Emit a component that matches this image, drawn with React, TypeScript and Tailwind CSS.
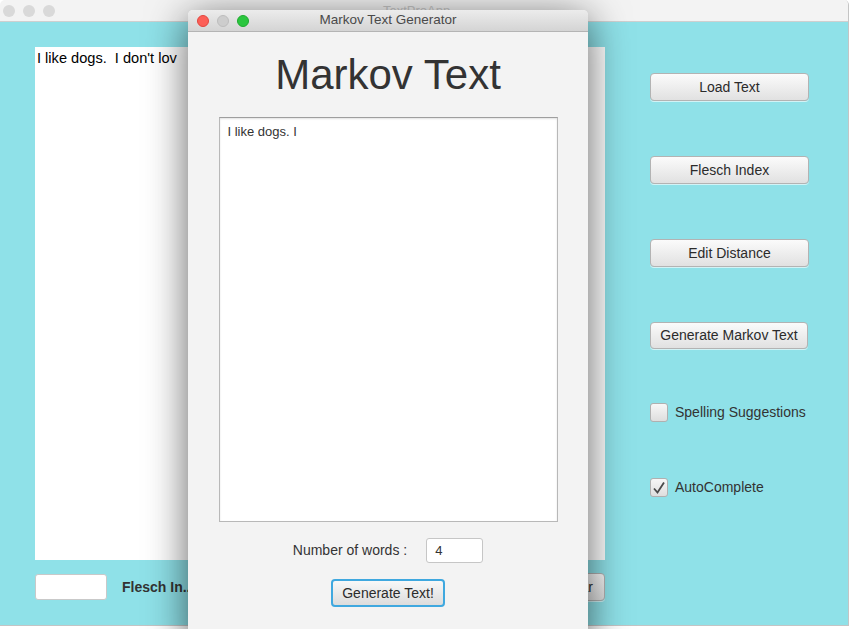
import type { FunctionComponent, ReactNode } from 'react';

const font = { fontFamily: '"Liberation Sans", Arial, sans-serif' };

const FxButton: FunctionComponent<{ label: string; className?: string }> = ({ label, className = '' }) => (
    <div
        className={`flex items-center justify-center rounded-[4px] border border-[#b3b3b3] bg-gradient-to-b from-[#fbfbfb] to-[#e1e1e1] text-[14px] text-[#2b2b2b] shadow-[0_1px_0_rgba(255,255,255,0.6)] ${className}`}
    >
        {label}
    </div>
);

const CheckBox: FunctionComponent<{ checked?: boolean; children: ReactNode }> = ({ checked, children }) => (
    <div className="flex items-center h-[19px]">
        <div className="flex items-center justify-center w-[18px] h-[19px] rounded-[3px] border border-[#b0b0b0] bg-gradient-to-b from-[#f7f7f7] to-[#dedede]">
            {checked && (
                <svg width="14" height="14" viewBox="0 0 14 14">
                    <path d="M2 7.5 L5.5 11.5 L12 1.5" fill="none" stroke="#4a4a4a" strokeWidth="1.8" />
                </svg>
            )}
        </div>
        <span className="ml-[7px] text-[14px] text-[#333]">{children}</span>
    </div>
);

const Light: FunctionComponent<{ color: string }> = ({ color }) => (
    <div className={`w-[12px] h-[12px] rounded-full ${color}`} />
);

export default function App() {
    return (
        <div className="relative w-[851px] h-[629px] overflow-hidden bg-white" style={font}>
            {/* main window */}
            <div className="w-[849px] h-[626px] flex flex-col rounded-t-[5px] border-r border-b border-[#c4c4c4] overflow-hidden">
                <div className="h-[22px] flex items-center gap-[8px] pl-[3px] bg-[#f3f3f3] border-b border-[#cfcfcf]">
                    <Light color="bg-[#d9d9d9]" />
                    <Light color="bg-[#d9d9d9]" />
                    <Light color="bg-[#d9d9d9]" />
                    <span className="ml-[320px] text-[13px] text-[#c8c8c8]">TextProApp</span>
                </div>
                <div className="flex-1 flex bg-[#8fe1e8] pl-[35px] pt-[25px]">
                    <div className="w-[570px] flex flex-col">
                        <div className="h-[513px] bg-white px-[2px] pt-[2px] text-[14.6px] text-black leading-[18px] whitespace-pre">
                            I like dogs.  I don't lov
                        </div>
                        <div className="mt-[13px] flex items-center">
                            <div className="w-[72px] h-[26px] rounded-[3px] border border-[#c9c9c9] bg-white" />
                            <span className="ml-[15px] text-[14px] font-bold text-[#333]">Flesch In...</span>
                            <FxButton label="Clear" className="ml-auto w-[69px] h-[28px] !justify-end pr-[11px]" />
                        </div>
                    </div>
                    <div className="ml-[45px] w-[159px] flex flex-col">
                        <FxButton label="Load Text" className="mt-[26px] h-[28px]" />
                        <FxButton label="Flesch Index" className="mt-[55px] h-[28px]" />
                        <FxButton label="Edit Distance" className="mt-[55px] h-[28px]" />
                        <FxButton label="Generate Markov Text" className="mt-[55px] h-[27px] w-[158px]" />
                        <div className="mt-[54px]">
                            <CheckBox>Spelling Suggestions</CheckBox>
                        </div>
                        <div className="mt-[56px]">
                            <CheckBox checked>AutoComplete</CheckBox>
                        </div>
                    </div>
                </div>
            </div>

            {/* dialog window */}
            <div className="absolute left-[188px] top-[10px] w-[400px] h-[640px] flex flex-col rounded-t-[5px] bg-[#f3f3f3] shadow-[0_8px_40px_rgba(0,0,0,0.62)]">
                <div className="relative h-[22px] flex items-center gap-[8px] pl-[9px] rounded-t-[5px] bg-gradient-to-b from-[#ececec] to-[#d4d4d4] border-b border-[#b4b4b4]">
                    <Light color="bg-[#fc5f57] border border-[#e2463f]" />
                    <Light color="bg-[#cdcdcd] border border-[#bdbdbd]" />
                    <Light color="bg-[#2bc63f] border border-[#1eab2f]" />
                    <span className="absolute inset-x-0 text-center text-[13.5px] text-[#4a4a4a]">Markov Text Generator</span>
                </div>
                <div className="flex flex-col items-center">
                    <div className="mt-[18px] text-[42px] leading-[50px] text-[#333]">Markov Text</div>
                    <div className="mt-[17px] w-[339px] h-[405px] bg-white border border-[#b8b8b8] border-t-[#9e9e9e] shadow-[inset_0_1px_2px_rgba(0,0,0,0.12)] px-[8px] pt-[4px] text-[13px] text-[#333]">
                        I like dogs. I
                    </div>
                    <div className="mt-[16px] flex items-center">
                        <span className="text-[14px] text-[#333]">Number of words :</span>
                        <div className="ml-[19px] w-[57px] h-[25px] flex items-center pl-[8px] rounded-[3px] border border-[#c6c6c6] bg-white text-[13px] text-[#333]">
                            4
                        </div>
                    </div>
                    <div className="mt-[16px] w-[114px] h-[28px] flex items-center justify-center rounded-[4px] border-2 border-[#3fa8df] bg-gradient-to-b from-[#f8f8f8] to-[#dcdcdc] text-[14px] text-[#2b2b2b]">
                        Generate Text!
                    </div>
                </div>
            </div>
        </div>
    );
}
